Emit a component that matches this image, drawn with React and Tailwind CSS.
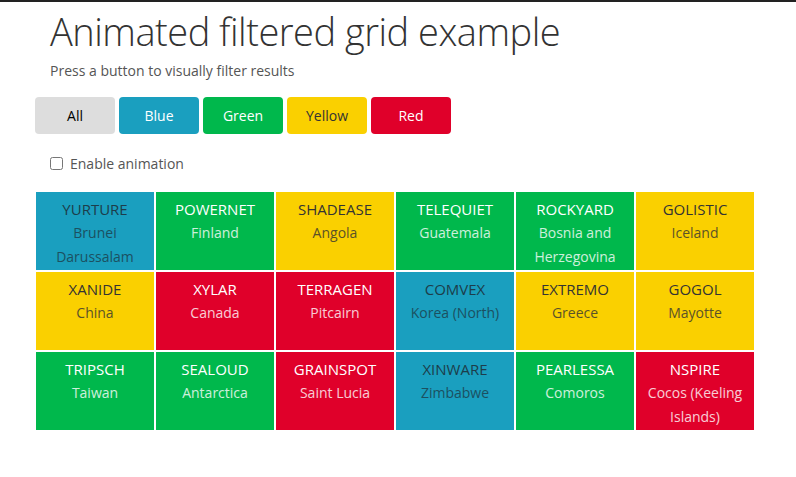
const buttons = [
  { label: "All", cls: "bg-[#dddddd] text-black" },
  { label: "Blue", cls: "bg-[#1a9fbf] text-white" },
  { label: "Green", cls: "bg-[#00b84c] text-white" },
  { label: "Yellow", cls: "bg-[#fad000] text-[#333]" },
  { label: "Red", cls: "bg-[#e0002a] text-white" },
];

const colors = {
  blue: "bg-[#1a9fbf] text-[#1d3d4a]",
  green: "bg-[#00b84c] text-white",
  yellow: "bg-[#fad000] text-[#333]",
  red: "bg-[#e0002a] text-white",
};

const items = [
  ["YURTURE", "Brunei Darussalam", "blue"],
  ["POWERNET", "Finland", "green"],
  ["SHADEASE", "Angola", "yellow"],
  ["TELEQUIET", "Guatemala", "green"],
  ["ROCKYARD", "Bosnia and Herzegovina", "green"],
  ["GOLISTIC", "Iceland", "yellow"],
  ["XANIDE", "China", "yellow"],
  ["XYLAR", "Canada", "red"],
  ["TERRAGEN", "Pitcairn", "red"],
  ["COMVEX", "Korea (North)", "blue"],
  ["EXTREMO", "Greece", "yellow"],
  ["GOGOL", "Mayotte", "yellow"],
  ["TRIPSCH", "Taiwan", "green"],
  ["SEALOUD", "Antarctica", "green"],
  ["GRAINSPOT", "Saint Lucia", "red"],
  ["XINWARE", "Zimbabwe", "blue"],
  ["PEARLESSA", "Comoros", "green"],
  ["NSPIRE", "Cocos (Keeling Islands)", "red"],
];

export default function App() {
  return (
    <div className="min-h-[477px] bg-white border-t-2 border-[#222] font-['Open_Sans',sans-serif] text-[#333]">
      <div className="pl-[35px]">
        <h1 className="pl-[15px] pt-[5px] text-[38px] leading-[48px] font-light text-[#333] tracking-[-0.5px]">
          Animated filtered grid example
        </h1>
        <p className="pl-[15px] mt-[6px] text-[14px] leading-[20px] text-[#555]">
          Press a button to visually filter results
        </p>
        <div className="flex gap-[4px] mt-[16px]">
          {buttons.map((b) => (
            <button
              key={b.label}
              className={`w-[80px] h-[37px] rounded-[4px] text-[14px] ${b.cls}`}
            >
              {b.label}
            </button>
          ))}
        </div>
        <label className="flex items-center gap-[7px] pl-[15px] mt-[19px] text-[14px] text-[#555]">
          <input type="checkbox" className="w-[13px] h-[13px]" />
          Enable animation
        </label>
        <div className="grid grid-cols-[repeat(6,120px)] mt-[17px]">
          {items.map(([name, country, c]) => (
            <div
              key={name}
              className={`m-[1px] h-[78px] pt-[5px] px-[4px] text-center text-[14px] leading-[24px] ${colors[c]}`}
            >
              <div className="text-[15px]">{name}</div>
              <div className="opacity-80">{country}</div>
            </div>
          ))}
        </div>
      </div>
    </div>
  );
}
